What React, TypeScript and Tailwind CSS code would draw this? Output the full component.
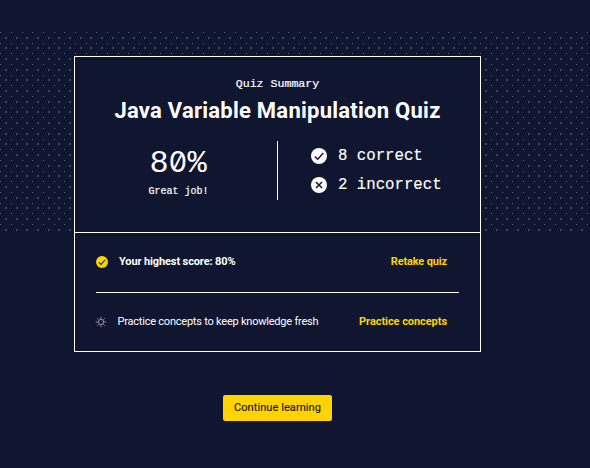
import React from "react";

const STEP = 32 / 3;

function dots(x0: number, y0: number, rows: number, size: number) {
  let d = "";
  for (let r = 0; r < rows; r++) {
    for (let c = 0; c < 57; c++) {
      d += `M${Math.floor(x0 + c * STEP)} ${Math.floor(y0 + r * STEP)}h${size}v${size}h-${size}z`;
    }
  }
  return d;
}

function DotBand() {
  return (
    <svg className="absolute left-0 top-8 w-full h-[200px]" aria-hidden="true">
      <path d={dots(0.67, 0.4, 19, 1)} fill="#5c5f72" />
      <path d={dots(5.4, 5.3, 19, 2)} fill="#40435a" />
    </svg>
  );
}

function CheckBadge({ className }: { className: string }) {
  return (
    <svg viewBox="0 0 16 16" className={className}>
      <circle cx="8" cy="8" r="8" fill="currentColor" />
      <path d="M3.8 8.4 6.7 11.3 12.3 5" fill="none" stroke="#10162f" strokeWidth="1.4" />
    </svg>
  );
}

function CrossBadge({ className }: { className: string }) {
  return (
    <svg viewBox="0 0 16 16" className={className}>
      <circle cx="8" cy="8" r="8" fill="currentColor" />
      <path d="M5 5 11 11M11 5 5 11" fill="none" stroke="#10162f" strokeWidth="1.5" />
    </svg>
  );
}

function GearIcon({ className }: { className: string }) {
  return (
    <svg viewBox="0 0 12 12" className={className} fill="none" stroke="currentColor">
      <circle cx="6" cy="6" r="2.6" strokeWidth="1" />
      <path d="M6 .8v2M6 9.2v2M.8 6h2M9.2 6h2M2.2 2.2l1.4 1.4M8.4 8.4l1.4 1.4M9.8 2.2 8.4 3.6M3.6 8.4 2.2 9.8" strokeWidth="1" />
    </svg>
  );
}

const mono = "font-['Liberation_Mono',monospace]";

export default function App() {
  return (
    <div className="relative h-[468px] w-full overflow-hidden bg-[#10162f] pt-14 font-['Roboto',sans-serif] text-white whitespace-nowrap">
      <DotBand />
      <main className="relative ml-[74px] flex w-[407px] flex-col items-center">
        <section className="h-[296px] w-full border border-white bg-[#10162f]">
          <div className="flex h-[176px] flex-col items-center border-b border-white pt-5">
            <p className={`${mono} text-[11.6px] leading-[14px] [-webkit-text-stroke:0.2px_white]`}>Quiz Summary</p>
            <h1 className="mt-1.5 text-[22px] leading-7 font-bold tracking-[0.25px]">Java Variable Manipulation Quiz</h1>
            <div className="mt-4 flex h-[59px] w-full">
              <div className="flex w-[203px] flex-col items-center border-r border-white pl-1">
                <div className={`${mono} mt-[5px] flex items-baseline text-[32px] leading-8`}>
                  <span className="w-[19px]">8</span>
                  <span className="flex w-[19px] justify-center font-['Inter'] text-[29px] leading-8 [font-feature-settings:'zero']">0</span>
                  <span className="w-[19px]">%</span>
                </div>
                <p className={`${mono} mt-1.5 ml-px text-[10px] leading-3 [-webkit-text-stroke:0.2px_white]`}>Great job!</p>
              </div>
              <div className={`${mono} flex flex-col gap-[9px] pl-[33px] pt-[5px] text-[15.7px] leading-5 [-webkit-text-stroke:0.15px_white]`}>
                <div className="flex items-center gap-[11px]">
                  <CheckBadge className="size-4" />
                  <span>8 correct</span>
                </div>
                <div className="flex items-center gap-[11px]">
                  <CrossBadge className="size-4" />
                  <span>2 incorrect</span>
                </div>
              </div>
            </div>
          </div>
          <div className="px-[21px] text-[11px]">
            <div className="flex h-[60px] items-center border-b border-white pr-3">
              <CheckBadge className="-mt-px size-3 text-[#ffd300]" />
              <span className="ml-[11px] font-bold tracking-[-0.12px]">Your highest score: 80%</span>
              <a className="ml-auto font-bold tracking-[-0.15px] text-[#ffd300]">Retake quiz</a>
            </div>
            <div className="flex h-[59px] items-center pr-3">
              <GearIcon className="-mt-px -ml-px size-3 text-[#92949f]" />
              <span className="ml-[10.5px] tracking-[-0.22px]">Practice concepts to keep knowledge fresh</span>
              <a className="ml-auto font-bold tracking-[-0.06px] text-[#ffd300]">Practice concepts</a>
            </div>
          </div>
        </section>
        <button className="mt-[43px] h-[26px] w-[109px] rounded-[2px] bg-[#ffd300] text-[11px] tracking-[0.08px] text-[#10162f] [-webkit-text-stroke:0.15px_#10162f]">
          Continue learning
        </button>
      </main>
    </div>
  );
}
